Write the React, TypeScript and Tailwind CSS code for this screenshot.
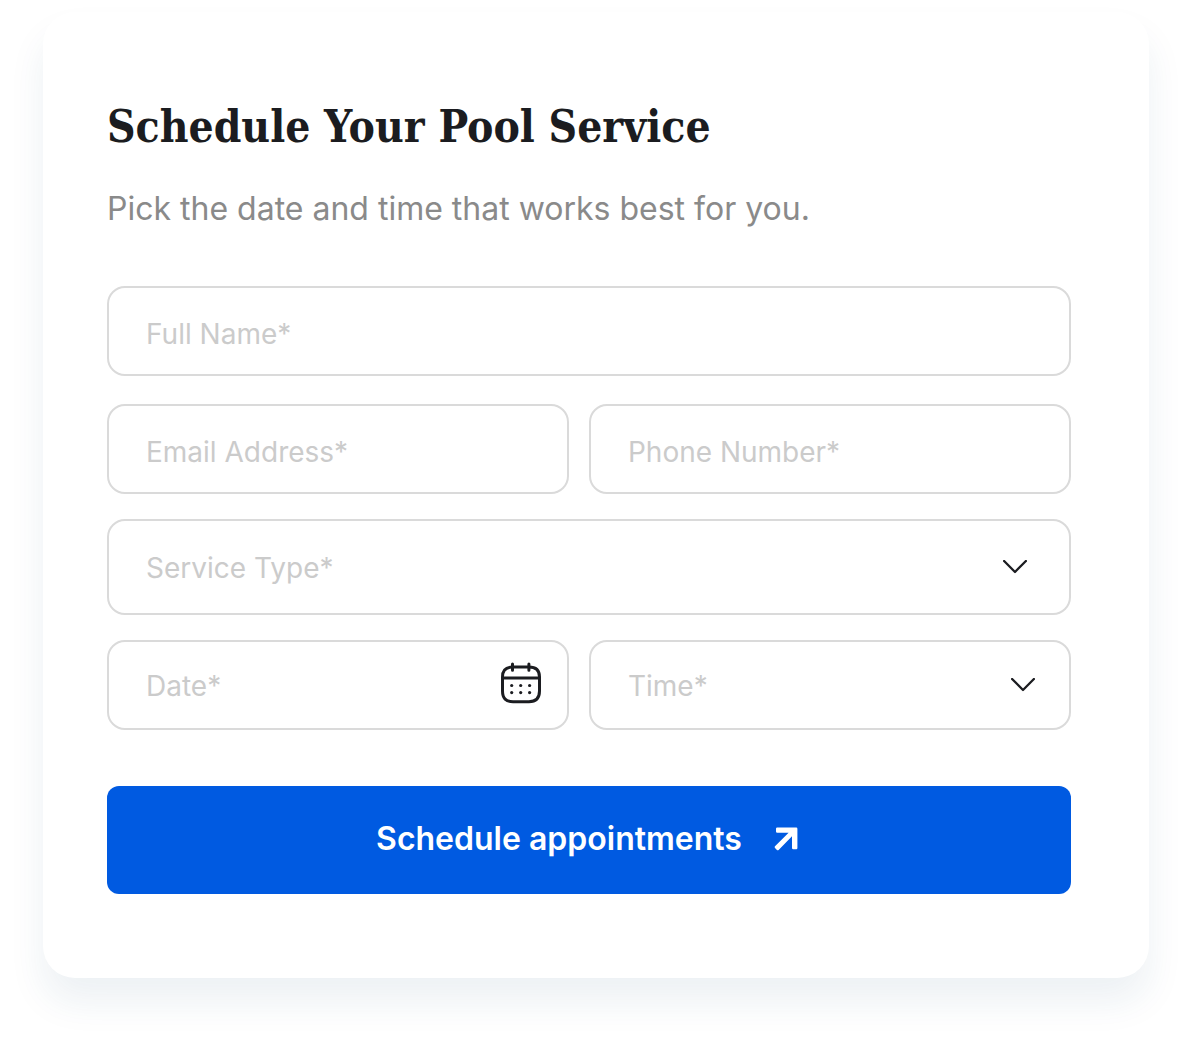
import { useState, type ReactNode } from "react";

const field =
  "block w-full rounded-[18px] border-2 border-[#dadada] bg-white pl-[37px] text-[28px] leading-9 outline-none focus:border-[#005ae1]";
const input = field + " h-[90px] pr-6 text-[#1b1c20] placeholder:text-[#cbcbcb] placeholder:opacity-100";

function ChevronIcon() {
  return (
    <svg
      viewBox="0 0 24 14"
      className="h-[14px] w-6"
      fill="none"
      stroke="#1b1c20"
      strokeWidth="2.3"
      strokeLinecap="round"
      strokeLinejoin="round"
      aria-hidden="true"
    >
      <path d="M1.1 1 12 12 22.9 1" />
    </svg>
  );
}

function CalendarIcon() {
  return (
    <svg viewBox="0 0 40 42" className="h-[42px] w-10" fill="none" stroke="#1b1c20" strokeWidth="3" aria-hidden="true">
      <path d="M11.5 1.9v6.4M27.9 1.9v6.4" strokeLinecap="round" />
      <path d="M1.5 16.1h37" />
      <path d="M11.5 5.1h16.4c7.2 0 10.6 3.4 10.6 9.9v14c0 7.4-3.4 10.7-10.6 10.7H12.1c-7.2 0-10.6-3.3-10.6-10.7V15c0-6.5 3.4-9.9 10-9.9Z" />
      <g fill="#1b1c20" stroke="none">
        <circle cx="10.7" cy="23.5" r="1.6" />
        <circle cx="19.7" cy="23.5" r="1.6" />
        <circle cx="28.6" cy="23.5" r="1.6" />
        <circle cx="10.7" cy="30.6" r="1.6" />
        <circle cx="19.7" cy="30.6" r="1.6" />
        <circle cx="28.6" cy="30.6" r="1.6" />
      </g>
    </svg>
  );
}

function ArrowIcon() {
  return (
    <svg viewBox="0 0 24 24" className="size-6" fill="#fff" aria-hidden="true">
      <path d="M3.2.6h19a1.2 1.2 0 0 1 1.2 1.2v19.3a1.2 1.2 0 0 1-1.2 1.2h-3a1.2 1.2 0 0 1-1.2-1.2V9.3L4.6 22.9a1.2 1.2 0 0 1-1.7 0L1 21a1.2 1.2 0 0 1 0-1.7L14.6 5.8H3.2A1.2 1.2 0 0 1 2 4.6V1.8A1.2 1.2 0 0 1 3.2.6Z" />
    </svg>
  );
}

interface SelectProps {
  label: string;
  options: string[];
  size: string;
  icon: string;
}

function SelectField({ label, options, size, icon }: SelectProps) {
  const [value, setValue] = useState("");
  return (
    <div className="relative">
      <select
        aria-label={label}
        value={value}
        onChange={(e) => setValue(e.target.value)}
        className={`${field} ${size} appearance-none pt-0.5 pr-20 ${value ? "text-[#1b1c20]" : "text-[#cbcbcb]"}`}
      >
        <option value="" disabled>
          {label}*
        </option>
        {options.map((o) => (
          <option key={o}>{o}</option>
        ))}
      </select>
      <span className={`pointer-events-none absolute inset-y-0 flex items-center ${icon}`}>
        <ChevronIcon />
      </span>
    </div>
  );
}

function Row({ children }: { children: ReactNode }) {
  return <div className="grid grid-cols-[23fr_24fr] gap-5">{children}</div>;
}

export default function App() {
  return (
    <main className="bg-white px-[43px] pt-3 pb-[68px] font-['Inter',sans-serif]">
      <section className="rounded-[32px] bg-white pt-[82px] pr-[78px] pb-[84px] pl-16 shadow-[0_24px_36px_rgba(24,74,110,0.08)]">
        <h1 className="font-['DejaVu_Serif_Condensed','DejaVu_Serif',serif] text-[44px] leading-[66px] font-semibold whitespace-nowrap text-[#1b1c20]">
          Schedule Your Pool Service
        </h1>
        <p className="mt-[25px] text-[32px] leading-[48px] text-[#8a8a8a]">
          Pick the date and time that works best for you.
        </p>
        <form className="mt-[53px]" onSubmit={(e) => e.preventDefault()}>
          <div className="flex flex-col gap-[25px]">
            <div className="flex flex-col gap-7">
              <input type="text" aria-label="Full Name" placeholder="Full Name*" className={input + " pt-1.5"} />
              <Row>
                <input type="email" aria-label="Email Address" placeholder="Email Address*" className={input + " pt-1.5"} />
                <input type="tel" aria-label="Phone Number" placeholder="Phone Number*" className={input + " pt-1.5"} />
              </Row>
            </div>
            <SelectField
              label="Service Type"
              options={["Cleaning", "Repair", "Maintenance"]}
              size="h-24"
              icon="right-[44px]"
            />
            <Row>
              <div className="relative">
                <input type="text" aria-label="Date" placeholder="Date*" className={input + " pt-0.5"} />
                <button type="button" aria-label="Choose date" className="absolute top-[22px] right-7">
                  <CalendarIcon />
                </button>
              </div>
              <SelectField label="Time" options={["9:00 AM", "12:00 PM", "3:00 PM"]} size="h-[90px]" icon="right-9" />
            </Row>
          </div>
          <button
            type="submit"
            className="mt-14 flex h-[108px] w-full items-center justify-center gap-8 rounded-xl bg-[#005ae1] pr-1 pb-0.5 text-[32px] leading-10 font-semibold text-white"
          >
            <span>Schedule appointments</span>
            <ArrowIcon />
          </button>
        </form>
      </section>
    </main>
  );
}
